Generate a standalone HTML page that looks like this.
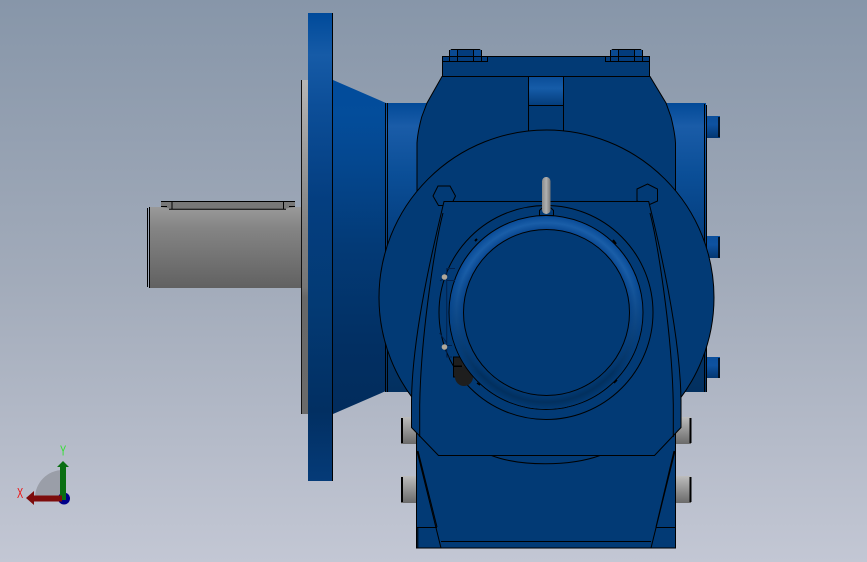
<!DOCTYPE html>
<html>
<head>
<meta charset="utf-8">
<style>
html,body{margin:0;padding:0;width:867px;height:562px;overflow:hidden;background:#a5adbb}
svg{display:block}
text{font-family:"Liberation Sans",sans-serif}
</style>
</head>
<body>
<svg width="867" height="562" viewBox="0 0 867 562" xmlns="http://www.w3.org/2000/svg">
<defs>
<linearGradient id="bg" x1="0" y1="0" x2="0" y2="1">
<stop offset="0" stop-color="#8796a9"/><stop offset=".5" stop-color="#a2abba"/><stop offset="1" stop-color="#c3c7d4"/>
</linearGradient>
<linearGradient id="bl" gradientUnits="userSpaceOnUse" x1="0" y1="13" x2="0" y2="481">
<stop offset="0" stop-color="#004a9a"/><stop offset=".09" stop-color="#165ba7"/><stop offset=".2" stop-color="#0c4e98"/><stop offset=".4" stop-color="#043e80"/><stop offset=".62" stop-color="#033a74"/><stop offset=".85" stop-color="#022f62"/><stop offset="1" stop-color="#053b78"/>
</linearGradient>
<linearGradient id="cone" gradientUnits="userSpaceOnUse" x1="0" y1="80" x2="0" y2="414">
<stop offset="0" stop-color="#014b9b"/><stop offset=".1" stop-color="#034d9b"/><stop offset=".25" stop-color="#04478f"/><stop offset=".5" stop-color="#033a76"/><stop offset=".8" stop-color="#022f62"/><stop offset="1" stop-color="#022c5c"/>
</linearGradient>
<linearGradient id="bodyb" gradientUnits="userSpaceOnUse" x1="0" y1="103" x2="0" y2="392">
<stop offset="0" stop-color="#024a98"/><stop offset=".08" stop-color="#1a5ca8"/><stop offset=".24" stop-color="#0b4f98"/><stop offset=".48" stop-color="#043d7d"/><stop offset=".8" stop-color="#02376e"/><stop offset="1" stop-color="#03305f"/>
</linearGradient>
<linearGradient id="slot" x1="0" y1="0" x2="0" y2="1">
<stop offset="0" stop-color="#0a4d98"/><stop offset=".4" stop-color="#165ca8"/><stop offset="1" stop-color="#043d7c"/>
</linearGradient>
<linearGradient id="bolt" x1="0" y1="0" x2="0" y2="1">
<stop offset="0" stop-color="#0b4f9c"/><stop offset=".4" stop-color="#0e52a0"/><stop offset="1" stop-color="#033670"/>
</linearGradient>
<linearGradient id="shaft" x1="0" y1="0" x2="0" y2="1">
<stop offset="0" stop-color="#9a9a9a"/><stop offset=".25" stop-color="#858585"/><stop offset="1" stop-color="#616161"/>
</linearGradient>
<linearGradient id="plate" gradientUnits="userSpaceOnUse" x1="0" y1="80" x2="0" y2="414">
<stop offset="0" stop-color="#b5b5b5"/><stop offset=".45" stop-color="#808080"/><stop offset=".62" stop-color="#767676"/><stop offset=".65" stop-color="#686868"/><stop offset="1" stop-color="#6a6a6a"/>
</linearGradient>
<linearGradient id="peg" x1="0" y1="0" x2="0" y2="1">
<stop offset="0" stop-color="#bdbdbd"/><stop offset="1" stop-color="#6a6a6a"/>
</linearGradient>
<linearGradient id="pin" x1="0" y1="0" x2="1" y2="0">
<stop offset="0" stop-color="#8a8a8a"/><stop offset=".5" stop-color="#b0b0b0"/><stop offset="1" stop-color="#777"/>
</linearGradient>
<radialGradient id="torusT" gradientUnits="userSpaceOnUse" cx="546" cy="312.500" r="97">
<stop offset="0" stop-color="#0a4b94"/><stop offset=".85" stop-color="#084690"/><stop offset=".925" stop-color="#1a5ea8"/><stop offset="1" stop-color="#084a96"/>
</radialGradient>
<radialGradient id="torusB" gradientUnits="userSpaceOnUse" cx="546" cy="312.500" r="97">
<stop offset="0" stop-color="#033b76"/><stop offset=".85" stop-color="#033b76"/><stop offset=".925" stop-color="#02305f"/><stop offset="1" stop-color="#033b76"/>
</radialGradient>
<linearGradient id="fade" gradientUnits="userSpaceOnUse" x1="0" y1="270" x2="0" y2="375">
<stop offset="0" stop-color="#000"/><stop offset="1" stop-color="#fff"/>
</linearGradient>
<mask id="m" maskUnits="userSpaceOnUse" x="440" y="200" width="220" height="220">
<rect x="440" y="200" width="220" height="220" fill="url(#fade)"/>
</mask>
</defs>

<rect width="867" height="562" fill="url(#bg)"/>

<!-- shaft + key -->
<rect x="149" y="207" width="154" height="81" fill="url(#shaft)"/>
<path d="M147.500 208V287M149.500 207V288" stroke="#000" fill="none"/>
<path d="M161 201.500H295V207L289 208 284 209H172L167 208 161 207Z" fill="#787878"/>
<path d="M161 201.500H295M172 201.500V209M283.500 201.500V209M169 209.300H286" stroke="#000" fill="none"/>
<rect x="161" y="206" width="6" height="1" fill="#000"/><rect x="289" y="206" width="6" height="1" fill="#000"/>

<!-- plate -->
<rect x="301" y="80" width="7" height="334" fill="url(#plate)"/>
<path d="M301.500 80V414" stroke="#111"/>

<!-- side pegs -->
<g fill="url(#peg)">
<rect x="401" y="417" width="20" height="27"/><rect x="401" y="476" width="20" height="27"/>
<rect x="672" y="417" width="19" height="27"/><rect x="672" y="476" width="19" height="27"/>
</g>
<path d="M402 418V443M402 477V502M690.500 418V443M690.500 477V502" stroke="#000" stroke-width="2"/>

<!-- right bolts -->
<g fill="url(#bolt)">
<rect x="706" y="116" width="14" height="22"/><rect x="706" y="236" width="14" height="22"/><rect x="706" y="357" width="14" height="21"/>
</g>
<path d="M719 117V137M719 237V258M719 358V378" stroke="#000" stroke-width="1.500"/>

<!-- body sides -->
<rect x="386" y="103" width="60" height="289" fill="url(#bodyb)"/>
<rect x="650" y="103" width="56" height="289" fill="url(#bodyb)"/>
<path d="M704.500 104V392M706.500 105V392" stroke="#000" fill="none"/>
<path d="M333 80 386 103V391L333 414Z" fill="url(#cone)"/>
<path d="M385.500 103V392M387.500 103V392" stroke="#000" fill="none"/>

<!-- flange -->
<rect x="308" y="13" width="25" height="468" fill="url(#bl)"/>
<path d="M332.500 13V481" stroke="#000" fill="none"/>

<!-- housing -->
<path d="M442 76.500 427 103 421.700 117C419 127 417.500 135 417 143V400H675.500V143C675 135 673.500 127 671 117L666 103 650 76.500Z" fill="#023a75" stroke="#000"/>
<rect x="528.500" y="77" width="35" height="28" fill="url(#slot)"/>
<path d="M528.500 77V131M563.500 77V131M528.500 105.500H563.500" stroke="#000" fill="none"/>

<!-- top bolts + plate -->
<g fill="#033c7c" stroke="#000">
<path d="M449.500 61V51.500L451.500 49.500H479.500L481.500 51.500V61Z"/>
<path d="M610.500 61V51.500L612.500 49.500H640.500L642.500 51.500V61Z"/>
</g>
<rect x="450" y="50" width="7" height="11" fill="#0a4a92"/><rect x="474" y="50" width="7" height="11" fill="#0a4a92"/>
<rect x="611" y="50" width="7" height="11" fill="#0a4a92"/><rect x="635" y="50" width="7" height="11" fill="#0a4a92"/>
<rect x="442.500" y="56.500" width="207" height="20" fill="#023a75" stroke="#000"/>
<rect x="443" y="57" width="44" height="4" fill="#033c7c"/><rect x="606" y="57" width="43" height="4" fill="#033c7c"/>
<path d="M442.500 61.500H487.500V56.500M605.500 56.500V61.500H649.500M449.500 50V61M481.500 50V61M457.500 50V61M473.500 50V61M610.500 50V61M642.500 50V61M618.500 50V61M634.500 50V61" stroke="#000" fill="none"/>

<!-- big disc -->
<circle cx="546.500" cy="297.500" r="167.500" fill="#023a75" stroke="#000"/>

<!-- lower base -->
<path d="M416.500 432V548H675.500V432Z" fill="#023a75" stroke="#000"/>
<path d="M417 451 441 548M418 451 437 527M675 451 651 548M674 451 656 527M441 541.500H651M417 527.500H437M656 527.500H675M417.800 527.500V548" stroke="#000" fill="none"/>
<path d="M491.500 455.500C520 466.500 570 466.500 600 455.500" stroke="#000" fill="#023a75"/>

<!-- hex bolts -->
<path d="M438 186H450L455.500 196 451 205.500H438.500L433 196Z" fill="#023a75" stroke="#000"/>
<path d="M647.500 184 657.500 189V201L647.500 205.500 637 201V189Z" fill="#023a75" stroke="#000"/>

<!-- front shield -->
<path d="M444 201.500H648.700C657 235 680 330 681 400V427.500L654.500 455.500H438.500L411.500 427.500V400C412.500 330 436 235 444 201.500Z" fill="#023a75" stroke="#000"/>
<path d="M443 213C436 240 421 330 419.700 405V437M650 213C657 240 672 330 673.300 405V437" stroke="#000" fill="none"/>

<!-- rings -->
<circle cx="546" cy="312.500" r="107" fill="#023a75" stroke="#000"/>
<!-- gland -->
<g fill="#1e1e1e" stroke="#000">
<rect x="453.500" y="357" width="9" height="9"/><rect x="453.500" y="366.500" width="15" height="10.500"/>
</g>
<circle cx="464" cy="377" r="9" fill="#1e1e1e"/>
<rect x="462" y="360" width="6" height="7" fill="#222"/>
<circle cx="546" cy="312.500" r="97" fill="url(#torusT)" stroke="#000"/>
<circle cx="546" cy="312.500" r="96.500" fill="url(#torusB)" mask="url(#m)"/>
<circle cx="546.500" cy="312.500" r="83" fill="#023a75" stroke="#000"/>

<!-- side cover -->
<path d="M455 268.500H446.700V357H452M446.700 280.500H455M446.700 345.500H452M440 281 446 277M439.500 333 447 343" stroke="#02214d" fill="none"/>
<circle cx="444.500" cy="277" r="2.800" fill="#b0a89a"/><circle cx="444.500" cy="347" r="2.800" fill="#b0a89a"/>

<!-- marks -->
<path d="M613 240 616 244M475 241 477 239" stroke="#000" stroke-width="2"/>
<path d="M614 383 617 380M477 383 480 385" stroke="#000" stroke-width="1.500"/>

<!-- pin -->
<path d="M539.500 215.500V210.500L542 208H551L553.500 210.500V215.500Z" fill="#023a75" stroke="#000"/>
<rect x="542" y="177" width="8.500" height="37" rx="4.200" fill="url(#pin)"/>

<!-- triad -->
<path d="M63 498V470A28 28 0 0 0 35 498Z" fill="#9a9ea8"/>
<circle cx="64" cy="498.500" r="6" fill="#00008a"/>
<path d="M60 500V467H57L63 461 69 467H66V500Z" fill="#0a6f12"/>
<path d="M62 495.500H34V491L26 498 34 505V501.500H62Z" fill="#7d0c0c"/>
<text transform="translate(60 455.500) scale(.62 1)" font-size="15" fill="#30e030">Y</text>
<text transform="translate(17 498) scale(.62 1)" font-size="15" fill="#f01010">X</text>
</svg>
</body>
</html>
